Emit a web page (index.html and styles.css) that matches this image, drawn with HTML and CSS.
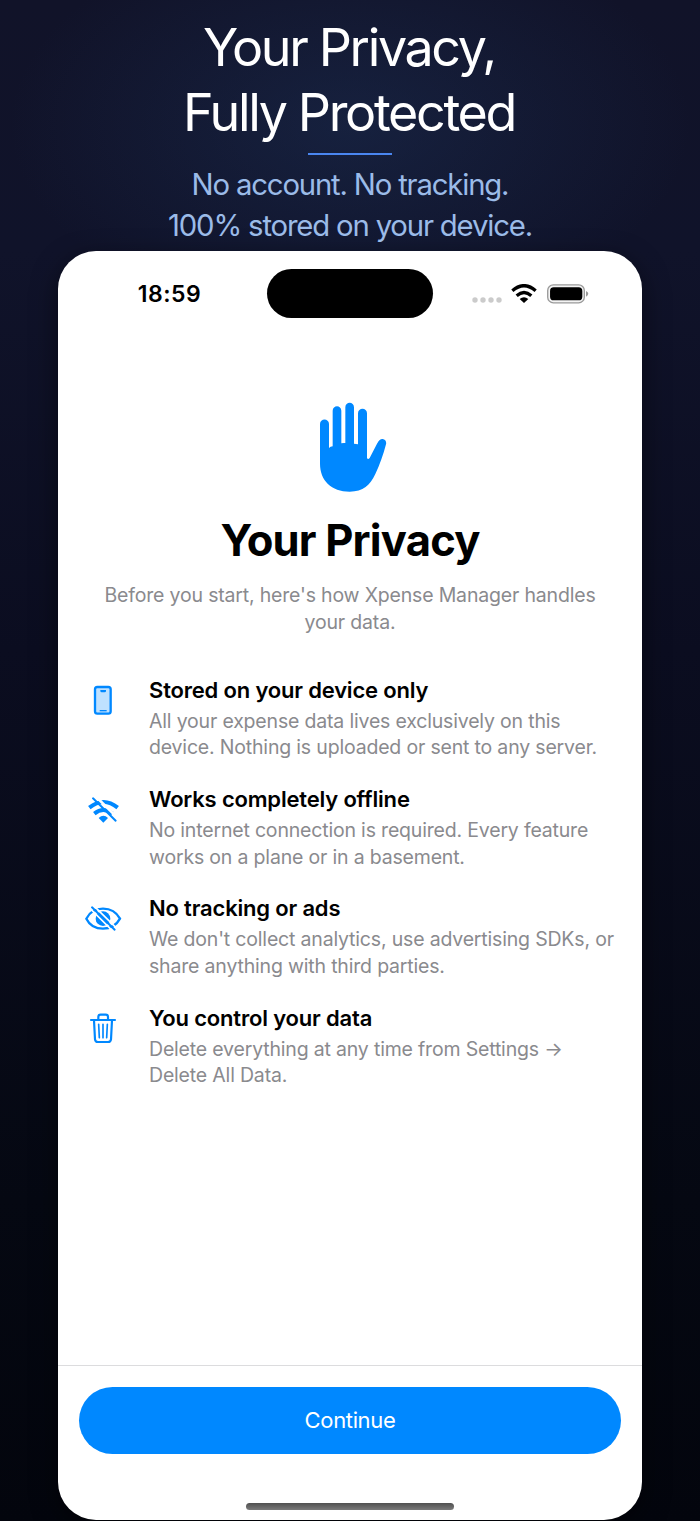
FILE: index.html
```
<!DOCTYPE html>
<html lang="en">
<head>
    <meta charset="UTF-8">
    <meta name="viewport" content="width=device-width, initial-scale=1.0">
    <title>Xpense Manager - Your Privacy</title>
    <link rel="stylesheet" href="styles.css">
</head>
<body>
    <header class="promo">
        <h1 class="promo-title">Your Privacy,<br>Fully Protected</h1>
        <div class="promo-line"></div>
        <p class="promo-sub">No account. No tracking.<br>100% stored on your device.</p>
    </header>

    <main class="phone">
        <div class="status-bar">
            <div class="time">18:59</div>
            <div class="island"></div>
            <div class="status-icons">
                <svg class="dots" viewBox="0 0 30 6" width="30" height="6" fill="#cbcbcb">
                    <circle cx="3" cy="3" r="2.7"/><circle cx="11" cy="3" r="2.7"/><circle cx="19" cy="3" r="2.7"/><circle cx="27" cy="3" r="2.7"/>
                </svg>
                <svg class="wifi" viewBox="333 131 78 58" width="26" height="19.3">
                    <path d="M337 151Q372 121 407 151M350 166Q372 147 394 166" fill="none" stroke="#000" stroke-width="10"/>
                    <path d="M359 176Q372 165 385 176L372 188Z"/>
                </svg>
                <svg class="battery" viewBox="440 131 125 58" width="41.7" height="19.3">
                    <rect x="442" y="133.500" width="110" height="54" rx="17" fill="#f4f4f4" stroke="#999" stroke-width="4"/>
                    <rect x="449" y="141" width="97" height="39" rx="11"/>
                    <path d="M557 152Q564 155 564 160.500T557 169Z" fill="#999"/>
                </svg>
            </div>
        </div>

        <section class="intro">
            <svg class="hand" viewBox="57 36 204 270" width="68" height="90" fill="#0088ff">
                <path d="M60 102C60 84 87 84 87 102V174Q91 170 98 169V62C98 44 124 44 124 62V160Q130 158 136 159V52C136 34 162 34 162 52V161L174 163V70C174 52 201 52 201 70V203Q203 210 209 204L231 161C237 150 243 146 248 147C256 148 260 155 258 163C250 193 239 226 226 252C210 285 190 305 149 305C94 305 60 271 60 221Z"/>
            </svg>
            <h2>Your Privacy</h2>
            <p>Before you start, here's how Xpense Manager handles<br>your data.</p>
        </section>

        <ul class="features">
            <li>
                <svg class="icon" viewBox="0 0 180 180">
                    <rect x="60" y="51" width="47" height="80" rx="7" fill="#bfe1ff" stroke="#0088ff" stroke-width="7"/>
                    <path d="M76 60h17v3q0 4-4 4h-9q-4 0-4-4Z" fill="#0088ff"/>
                    <path d="M74 122h21" stroke="#0088ff" stroke-width="4"/>
                </svg>
                <div>
                    <h3>Stored on your device only</h3>
                    <p>All your expense data lives exclusively on this<br>device. Nothing is uploaded or sent to any server.</p>
                </div>
            </li>
            <li>
                <svg class="icon" viewBox="0 -2 180 180">
                    <path d="M43 84Q86 50 128 84M58 102Q85 80 112 102" fill="none" stroke="#0088ff" stroke-width="12"/>
                    <path d="M71 115Q85 101 99 115L85 129Z" fill="#0088ff"/>
                    <path d="M61 49L130 117" stroke="#fff" stroke-width="8"/>
                    <path d="M54 56L122 123" stroke="#0088ff" stroke-width="6" stroke-linecap="round"/>
                </svg>
                <div>
                    <h3>Works completely offline</h3>
                    <p>No internet connection is required. Every feature<br>works on a plane or in a basement.</p>
                </div>
            </li>
            <li>
                <svg class="icon" viewBox="0 -5 180 180">
                    <path d="M34 87C44 67 63 57 84 57S124 67 135 87C124 107 105 117 84 117S44 107 34 87Z" fill="none" stroke="#0088ff" stroke-width="7"/>
                    <circle cx="84" cy="87" r="22" fill="#0088ff"/>
                    <path d="M45 56L115 126M55 47L126 117" stroke="#fff" stroke-width="5"/>
                    <path d="M51 53L119 120" stroke="#0088ff" stroke-width="6" stroke-linecap="round"/>
                </svg>
                <div>
                    <h3>No tracking or ads</h3>
                    <p>We don't collect analytics, use advertising SDKs, or<br>share anything with third parties.</p>
                </div>
            </li>
            <li>
                <svg class="icon" viewBox="0 -6 180 180" fill="none" stroke="#0088ff" stroke-linecap="round" stroke-linejoin="round">
                    <path d="M48 60H120M70 59V51Q70 44 77 44H92Q99 44 99 51V59M57 61L60 118Q61 126 69 126H99Q107 126 108 118L111 61" stroke-width="6.500"/>
                    <path d="M71 73L73 113M84 73V113M97 73L95 113" stroke-width="5"/>
                </svg>
                <div>
                    <h3>You control your data</h3>
                    <p>Delete everything at any time from Settings →<br>Delete All Data.</p>
                </div>
            </li>
        </ul>

        <footer class="bottom">
            <button class="continue">Continue</button>
            <div class="home-bar"></div>
        </footer>
    </main>
</body>
</html>
```
FILE: styles.css
```
* {
    box-sizing: border-box;
    margin: 0;
    padding: 0;
}
body {
    height: 1521px;
    overflow: hidden;
    font-family: Inter, sans-serif;
    background:
        radial-gradient(ellipse 340px 200px at 350px 125px, rgba(30, 52, 92, 0.42), rgba(30, 52, 92, 0)),
        linear-gradient(#111329 0, #10132a 250px, #0b0d20 650px, #050812 1200px, #03050d 1521px);
}
.promo {
    height: 251px;
    padding-top: 16px;
    display: flex;
    flex-direction: column;
    align-items: center;
    text-align: center;
}
.promo-title {
    margin-left: -2px;
    font-size: 52px;
    font-weight: 400;
    line-height: 64.8px;
    color: #fff;
    letter-spacing: -2.35px;
}
.promo-line {
    width: 84px;
    height: 2px;
    margin: 7.4px 0 9px;
    background: #4a86f0;
}
.promo-sub {
    font-size: 29.3px;
    line-height: 41.3px;
    color: #9bbbe8;
    letter-spacing: -1.17px;
}
.phone {
    width: 584px;
    height: 1269px;
    margin: 0 auto;
    display: flex;
    flex-direction: column;
    background: #fff;
    border-radius: 38px;
    box-shadow: 0 8px 26px rgba(0, 0, 0, 0.5);
}
.status-bar {
    display: grid;
    grid-template-columns: 1fr 166px 1fr;
    align-items: center;
    height: 49px;
    margin-top: 18.4px;
}
.time {
    padding: 1px 0 0 14px;
    text-align: center;
    font-size: 23px;
    font-weight: 600;
    letter-spacing: 0.5px;
}
.island {
    height: 49px;
    background: #000;
    border-radius: 25px;
}
.status-icons {
    display: flex;
    align-items: center;
    padding-left: 39px;
}
.dots {
    margin-top: 13px;
}
.wifi {
    margin: 0 10px 0 9px;
}
.intro {
    display: flex;
    flex-direction: column;
    align-items: center;
    text-align: center;
    padding-top: 83.6px;
}
.hand {
    margin-left: 6px;
}
.intro h2 {
    margin: 22px 0 16.5px;
    font-size: 43.5px;
    line-height: 52px;
    font-weight: 700;
    letter-spacing: -0.8px;
}
.intro p, .features p {
    font-size: 19.5px;
    line-height: 26.6px;
    letter-spacing: -0.18px;
    color: #8a8a8e;
}
.features {
    display: flex;
    flex-direction: column;
    gap: 24.6px;
    margin-top: 40px;
    padding-left: 17px;
    list-style: none;
}
.features li {
    display: flex;
    gap: 14px;
    height: 84.7px;
    white-space: nowrap;
}
.icon {
    flex: none;
    width: 60px;
    height: 60px;
    margin-top: -6px;
}
.features h3 {
    margin-bottom: 4.2px;
    font-size: 22px;
    font-weight: 600;
    line-height: 28px;
    letter-spacing: -0.18px;
}
.bottom {
    height: 155px;
    margin-top: auto;
    padding: 21px 21px 0;
    border-top: 1px solid #dcdcde;
}
.continue {
    display: block;
    width: 100%;
    height: 66.5px;
    border: none;
    border-radius: 34px;
    background: #0088ff;
    color: #fff;
    font-family: inherit;
    font-size: 22px;
    letter-spacing: -0.35px;
}
.home-bar {
    width: 208px;
    height: 7px;
    margin: 49px auto 0;
    border-radius: 4px;
    background: linear-gradient(#505050, #7a7a7a);
}
```
